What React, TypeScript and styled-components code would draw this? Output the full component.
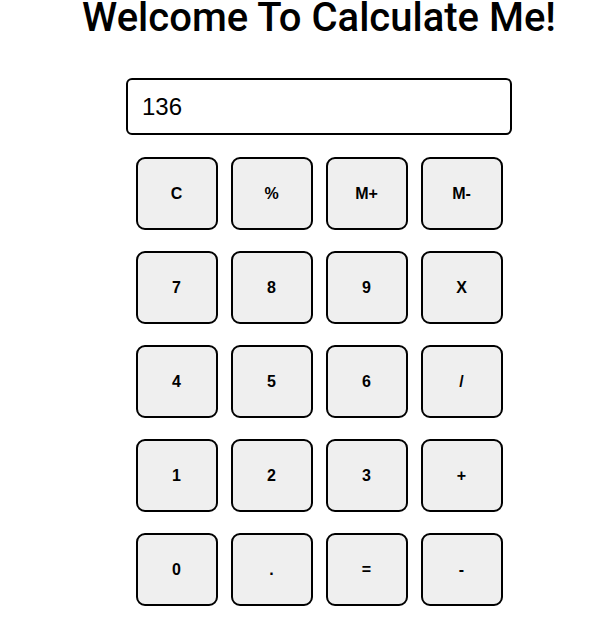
import React, { useState } from 'react'
import styled, { createGlobalStyle } from 'styled-components'

const keys = [
  'C', '%', 'M+', 'M-',
  '7', '8', '9', 'X',
  '4', '5', '6', '/',
  '1', '2', '3', '+',
  '0', '.', '=', '-',
]

const App = () => {
  const [value] = useState('136')
  return (
    <>
      <GlobalStyle />
      <Page>
        <Title>Welcome To Calculate Me!</Title>
        <Display value={value} readOnly />
        <Keypad>
          {keys.map((k) => (
            <Key key={k}>{k}</Key>
          ))}
        </Keypad>
      </Page>
    </>
  )
}

const GlobalStyle = createGlobalStyle`
  html, body {
    margin: 0;
    padding: 0;
    background: #ffffff;
  }
`

const Page = styled.div`
  display: flex;
  flex-direction: column;
  align-items: center;
  padding-left: 41px;
  font-family: 'Liberation Sans', Arial, sans-serif;
`

const Title = styled.h1`
  margin: -2px 0 0;
  font-family: Roboto, sans-serif;
  font-size: 40px;
  font-weight: 500;
  line-height: 40px;
  color: #000;
  white-space: nowrap;
`

const Display = styled.input`
  box-sizing: border-box;
  width: 386px;
  height: 57px;
  margin-top: 40px;
  padding: 0 14px;
  border: 2px solid #000;
  border-radius: 6px;
  font-family: 'Liberation Sans', Arial, sans-serif;
  font-size: 24px;
  color: #000;
  outline: none;
`

const Keypad = styled.div`
  display: grid;
  grid-template-columns: repeat(4, 82px);
  grid-auto-rows: 73px;
  column-gap: 13px;
  row-gap: 21px;
  margin-top: 22px;
`

const Key = styled.button`
  box-sizing: border-box;
  border: 2px solid #000;
  border-radius: 9px;
  background: #efefef;
  font-family: 'Liberation Sans', Arial, sans-serif;
  font-size: 16px;
  font-weight: 700;
  color: #000;
  cursor: pointer;
`

export default App
